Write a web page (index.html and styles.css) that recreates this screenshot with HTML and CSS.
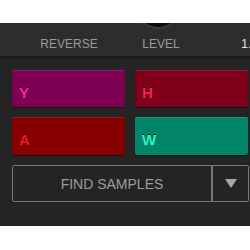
FILE: index.html
```html
<!DOCTYPE html>
<html lang="en">
<head>
    <meta charset="UTF-8">
    <meta name="viewport" content="width=device-width, initial-scale=1.0">
    <title>Pads</title>
    <link rel="stylesheet" href="styles.css">
</head>
<body>
    <div class="panel">
        <div class="header">
            <div class="knob"></div>
            <div class="label">REVERSE</div>
            <div class="label">LEVEL</div>
            <div class="label value">1.00</div>
        </div>
        <div class="pads">
            <div class="pad pad-y">Y</div>
            <div class="pad pad-h">H</div>
            <div class="pad pad-a">A</div>
            <div class="pad pad-w">W</div>
        </div>
        <div class="finder">
            <div class="finder-text">FIND SAMPLES</div>
            <div class="finder-arrow"><span class="triangle"></span></div>
        </div>
    </div>
</body>
</html>
```

FILE: styles.css
```css
body {
    margin: 0;
    background-color: #fff;
    font-family: 'Liberation Sans', 'Helvetica', 'Arial', sans-serif;
    overflow: hidden;
}

.panel {
    margin-top: 23px;
    height: 203px;
    background-color: #242424;
    overflow: hidden;
}

.header {
    position: relative;
    height: 35px;
    background-color: #2d2d2d;
    border-bottom: 2px solid #1b1b1b;
    display: flex;
    padding-left: 23px;
    box-sizing: border-box;
    white-space: nowrap;
}

.knob {
    position: absolute;
    left: 136px;
    top: -40px;
    width: 44px;
    height: 44px;
    border-radius: 50%;
    background-color: #0c0c0c;
    box-shadow: 0 0 0 2px #3a3a3a;
}

.label {
    width: 92px;
    flex-shrink: 0;
    text-align: center;
    padding-top: 14px;
    font-size: 12px;
    color: #9a9a9a;
}

.value {
    color: #e6e6e6;
}

.pads {
    display: grid;
    grid-template-columns: 113px 113px;
    grid-template-rows: 37px 38px;
    gap: 10px;
    padding: 12px 0 0 12px;
}

.pad {
    border-radius: 2px;
    font-size: 15px;
    font-weight: bold;
    padding: 14px 0 0 7px;
    box-sizing: border-box;
    text-shadow: 0 -1px 0 rgba(0, 0, 0, 0.8);
    box-shadow: inset 0 1px 0 rgba(255, 255, 255, 0.12), 0 1px 1px rgba(0, 0, 0, 0.5);
}

.pad-y {
    background-color: #7d0052;
    color: #ff22a8;
}

.pad-h {
    background-color: #80001a;
    color: #ff2050;
}

.pad-a {
    background-color: #870000;
    color: #ff1818;
}

.pad-w {
    background-color: #00846a;
    color: #20ffc8;
}

.finder {
    display: flex;
    margin: 10px 0 0 12px;
    width: 237px;
    height: 37px;
    border: 1px solid #767676;
    border-radius: 2px;
    box-sizing: border-box;
}

.finder-text {
    flex: 1;
    display: flex;
    align-items: center;
    justify-content: center;
    font-size: 14px;
    color: #9c9c9c;
    border-right: 2px solid #767676;
}

.finder-arrow {
    width: 35px;
    display: flex;
    align-items: center;
    justify-content: center;
}

.triangle {
    width: 0;
    height: 0;
    border-left: 6px solid transparent;
    border-right: 6px solid transparent;
    border-top: 9px solid #a8a8a8;
}
```
